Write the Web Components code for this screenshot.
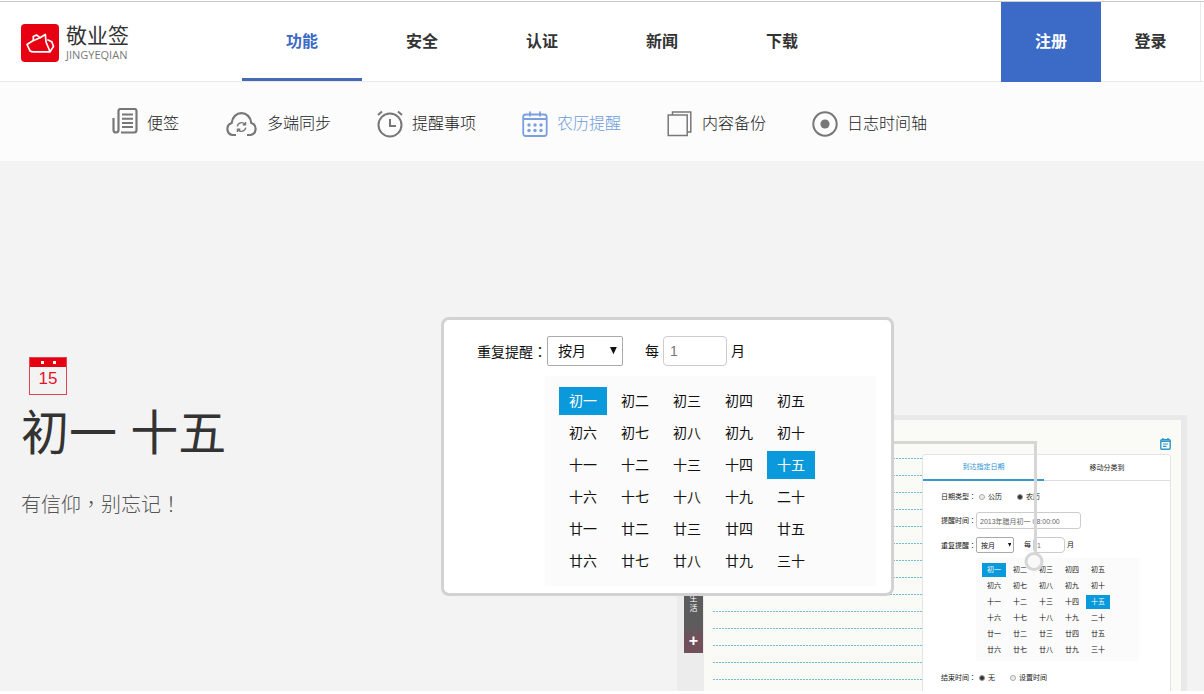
<!DOCTYPE html>
<html lang="zh-CN">
<head>
<meta charset="utf-8">
<title>敬业签</title>
<style>
html, body { margin: 0; }
body {
  background: #fff; color: #333;
  font: 16px/24px "Liberation Sans", "Noto Sans CJK SC", sans-serif;
}
</style>
</head>
<body>
<jy-page></jy-page>

<script>
function define(name, html, setup) {
  const tpl = document.createElement('template');
  tpl.innerHTML = '<style>*{box-sizing:border-box}button,input,select{font:inherit;color:inherit;margin:0}.mark{font-family:"Noto Sans CJK TC",sans-serif}</style>' + html;
  customElements.define(name, class extends HTMLElement {
    constructor() {
      super();
      this.attachShadow({ mode: 'open' }).append(tpl.content.cloneNode(true));
    }
    connectedCallback() {
      if (setup && !this.ready) { this.ready = true; setup(this, this.shadowRoot); }
    }
  });
}

/* Line icons */
const ICONS = {
  note: [26, 32, '<path d="M6.500 22V3q0-2 2-2h14q2 0 2 2v19q0 2.500-2.500 2.500H9M6.500 22q0 2.500-2.500 2.500t-2.500-2.500V10" stroke-width="2.200"/><path d="M10 6.500h11M10 10.700h11M10 14.900h11M10 19.100h11" stroke-width="2"/>'],
  cloud: [33, 26, '<path d="M11 24H7.500A6.200 6.200 0 0 1 6.700 12C7.200 6 11.500 2.200 16.500 2.200S25.800 6 26.300 12A6.200 6.200 0 0 1 25.500 24H22" stroke-width="2.200"/><path d="M12.300 15.300a4.300 4.300 0 0 1 7.600-2M20.700 16.700a4.300 4.300 0 0 1-7.600 2M20.500 11v2.800h-2.800M12.500 21v-2.800h2.800" stroke-width="1.400"/>'],
  alarm: [26, 28, '<circle cx="13" cy="15" r="11.500" stroke-width="2"/><path d="M13 9v7h6M1 5l4-3.500M25 5l-4-3.500" stroke-width="2"/>'],
  calendar: [26, 26, '<rect x="1.200" y="3.500" width="23.500" height="21.500" rx="2.500" stroke-width="1.800"/><path d="M1.500 8h23M8 .5v5M18 .5v5" stroke-width="1.800"/><g fill="currentColor" stroke="none"><circle cx="7" cy="14" r="1.700"/><circle cx="13" cy="14" r="1.700"/><circle cx="19" cy="14" r="1.700"/><circle cx="7" cy="19.500" r="1.700"/><circle cx="13" cy="19.500" r="1.700"/><circle cx="19" cy="19.500" r="1.700"/></g>'],
  copy: [26, 26, '<path d="M1.200 4h19v20.500h-19zM5.500 3.500V1H23.800V21H20.500" stroke-width="1.500"/>'],
  target: [26, 26, '<circle cx="13" cy="13" r="11.700" stroke-width="2"/><circle cx="13" cy="13" r="4.600" fill="currentColor" stroke="none"/>'],
  memo: [11, 12, '<rect x=".8" y="1.800" width="9.400" height="9.400" rx="1" stroke-width="1.400"/><path d="M1 3.200h9M3 0v2M8 0v2" stroke-width="1.400"/><path d="M3 6h5M3 8.300h3.500" stroke-width="1.200"/>']
};
define('jy-icon', '<style>:host{display:block;flex:none}svg{display:block;fill:none;stroke:currentColor}</style>', (el, root) => {
  const [w, h, body] = ICONS[el.getAttribute('name')];
  root.innerHTML += `<svg width="${w}" height="${h}" viewBox="0 0 ${w} ${h}" aria-hidden="true">${body}</svg>`;
});

define('jy-logo', `
<style>
:host { display: block; }
a { display: flex; align-items: center; gap: 7px; color: #333; text-decoration: none; }
svg { display: block; flex: none; }
.words { display: flex; flex-direction: column; }
.cn { font-size: 21px; line-height: 24px; }
.en { font: 11px/14px "Open Sans", "Noto Sans", sans-serif; color: #777; }
</style>
<a href="#">
  <svg width="38" height="38" viewBox="0 0 38 38" aria-hidden="true">
    <rect width="38" height="38" rx="4" fill="#e60012"/>
    <g fill="none" stroke="#fff" stroke-width="1.700" stroke-linejoin="round" stroke-linecap="round">
      <path d="M19 13.700 11.500 17 6 20.500 9 26.800Q10 27.800 13 27.800H29L32.500 22.500 30.800 17.800 27 16"/>
      <path d="M12.300 16 12.300 12.500 15.500 11 19 13.700 24.300 10.500 25 18 29 27.500"/>
    </g>
  </svg>
  <span class="words"><span class="cn">敬业签</span><span class="en">JINGYEQIAN</span></span>
</a>`);

define('jy-nav-item', `
<style>
:host { display: block; width: 120px; }
a { display: block; height: 79px; line-height: 79px; text-align: center; font-weight: bold; color: #333; text-decoration: none; }
:host([active]) a { color: #3b6ac7; border-bottom: 3px solid #4569b5; }
</style>
<a href="#"><slot></slot></a>`);

define('jy-header', `
<style>
:host { display: block; padding-top: 1px; background: #fff; }
header { display: flex; align-items: stretch; border-top: 1px solid #ccc; border-bottom: 1px solid #e9e9e9; padding: 0 3px 0 21px; height: 81px; }
jy-logo { width: 221px; padding-top: 22px; }
nav { display: flex; }
.account { display: flex; margin-left: auto; border-right: 1px solid #e9e9e9; }
.account a { width: 100px; height: 80px; line-height: 80px; text-align: center; font-weight: bold; color: #333; text-decoration: none; }
.account a.primary { background: #3b6ac7; color: #fff; }
.account a:last-child { width: 99px; }
</style>
<header>
  <jy-logo></jy-logo>
  <nav>
    <jy-nav-item active>功能</jy-nav-item><jy-nav-item>安全</jy-nav-item><jy-nav-item>认证</jy-nav-item><jy-nav-item>新闻</jy-nav-item><jy-nav-item>下载</jy-nav-item>
  </nav>
  <div class="account"><a class="primary" href="#">注册</a><a href="#">登录</a></div>
</header>`);

define('jy-feature-link', `
<style>
:host { display: block; }
a { display: flex; align-items: center; gap: 9px; color: #222; font-weight: 300; text-decoration: none; white-space: nowrap; }
jy-icon { color: #777; }
:host([active]) a { color: #6f9bdd; }
:host([active]) jy-icon { color: #7ba0e0; }
</style>
<a href="#"><slot></slot></a>`, (el, root) => {
  const icon = document.createElement('jy-icon');
  icon.setAttribute('name', el.getAttribute('icon'));
  root.querySelector('a').prepend(icon);
});

define('jy-features', `
<style>
:host { display: block; background: #fcfcfc; }
nav { display: flex; align-items: center; gap: 46px; height: 79px; padding: 4px 20px 0 112px; }
</style>
<nav>
  <jy-feature-link icon="note">便签</jy-feature-link>
  <jy-feature-link icon="cloud">多端同步</jy-feature-link>
  <jy-feature-link icon="alarm">提醒事项</jy-feature-link>
  <jy-feature-link icon="calendar" active>农历提醒</jy-feature-link>
  <jy-feature-link icon="copy">内容备份</jy-feature-link>
  <jy-feature-link icon="target">日志时间轴</jy-feature-link>
</nav>`);

/* Thirty lunar days in rows of five; sizes come from custom properties */
define('jy-lunar-days', `
<style>
:host { display: block; background: #fbfbfb; }
.days { display: grid; grid-template-columns: repeat(5, var(--day-w)); grid-auto-rows: var(--day-h); gap: var(--day-gap); }
button { border: 0; padding: 0; background: none; color: #111; text-align: center; line-height: var(--day-h); }
button[aria-pressed=true] { background: #0a9adb; color: #fff; }
</style>
<div class="days"></div>`, (el, root) => {
  const days = '初一 初二 初三 初四 初五 初六 初七 初八 初九 初十 十一 十二 十三 十四 十五 十六 十七 十八 十九 二十 廿一 廿二 廿三 廿四 廿五 廿六 廿七 廿八 廿九 三十'.split(' ');
  root.querySelector('.days').innerHTML = days.map((d, i) =>
    `<button type="button" aria-pressed="${i === 0 || i === 14}">${d}</button>`).join('');
});

/* "Repeat every N months" row, used at two sizes */
define('jy-repeat-row', `
<style>
:host { display: block; }
.row { display: flex; align-items: center; color: #111; }
.name { width: var(--label-w); white-space: nowrap; }
.pick { position: relative; width: var(--select-w); margin-right: var(--row-gap); }
select { appearance: none; display: block; width: 100%; height: var(--field-h); line-height: 1; padding: 0 0 0 var(--field-pad); border: 1px solid #aaa; border-radius: 2px; background: #fff; }
svg { position: absolute; right: 8%; top: 38%; width: 9%; height: 24%; }
input { width: var(--input-w); height: var(--field-h); margin: 0 var(--input-gap); padding: 0 var(--input-pad); border: 1px solid #ccc; border-radius: 4px; background: #fff; color: #777; }
</style>
<div class="row">
  <label class="name" for="unit">重复提醒<span class="mark" lang="zh-TW">：</span></label>
  <span class="pick"><select id="unit"><option>按月</option></select><svg viewBox="0 0 8 8" preserveAspectRatio="none" aria-hidden="true"><path d="M0 0h8L4 8z" fill="#111"/></svg></span>
  <label for="count">每</label><input id="count" value="1"><span>月</span>
</div>`);

define('jy-zoom-card', `
<style>
:host {
  display: block; width: 453px; height: 279px; padding: 16px 15px 6px 33px;
  border: 3px solid #d2d2d2; border-radius: 8px; background: #fff; font-size: 14px; line-height: 20px;
  --label-w: 70px; --select-w: 76px; --field-h: 30px; --field-pad: 10px; --row-gap: 22px;
  --input-w: 64px; --input-gap: 4px; --input-pad: 6px;
  --day-w: 48px; --day-h: 28px; --day-gap: 4px;
  box-sizing: border-box;
}
jy-lunar-days { margin: 10px 0 0 68px; padding: 11px 0 11px 14px; }
</style>
<jy-repeat-row></jy-repeat-row>
<jy-lunar-days></jy-lunar-days>`);

define('jy-reminder-panel', `
<style>
:host {
  display: block; border: 1px solid #e3e3e3; border-radius: 3px; background: #fff; font-size: 7px; line-height: 10px; color: #222;
  --label-w: 35px; --select-w: 38px; --field-h: 16px; --field-pad: 4px; --row-gap: 10px;
  --input-w: 32px; --input-gap: 2px; --input-pad: 3px;
  --day-w: 24px; --day-h: 14px; --day-gap: 2px;
}
.tabs { display: grid; grid-template-columns: 121px 1fr; height: 26px; border-bottom: 1px solid #ddd; }
.tabs button { border: 0; padding: 0; background: none; }
.tabs button:first-child { color: #2a94d0; border-bottom: 2px solid #3a98cb; margin-bottom: -1px; }
form { padding: 10px 31px 0 18px; }
.row { display: flex; align-items: center; }
.name { width: 35px; white-space: nowrap; }
.choice { display: flex; align-items: center; gap: 3px; padding-left: 3px; }
.choice input { appearance: none; width: 6px; height: 6px; border: 1px solid #aaa; border-radius: 50%; background: #eee; }
.choice input:checked { border-color: #999; background: #333; }
.choice + .choice { margin-left: 12px; }
.time { margin: 10px 0 8px; }
.time input { width: 105px; height: 17px; padding: 0 3px; border: 1px solid #ccc; border-radius: 3px; color: #666; }
jy-lunar-days { margin: 5px 0 11px 35px; padding: 5px 0 4px 6px; }
.actions { display: flex; justify-content: flex-end; gap: 14px; margin: 9px -23px 0 0; }
.actions span { width: 28px; height: 12px; background: #0a9adb; }
.actions span + span { background: #ddd; }
</style>
<div class="tabs"><button type="button">到达指定日期</button><button type="button">移动分类到</button></div>
<form>
  <div class="row kinds"><span class="name">日期类型<span class="mark" lang="zh-TW">：</span></span>
    <label class="choice"><input type="radio" name="kind">公历</label>
    <label class="choice"><input type="radio" name="kind" checked>农历</label></div>
  <div class="row time"><label class="name" for="at">提醒时间<span class="mark" lang="zh-TW">：</span></label><input id="at" value="2013年腊月初一 08:00:00"></div>
  <jy-repeat-row></jy-repeat-row>
  <jy-lunar-days></jy-lunar-days>
  <div class="row ends"><span class="name">结束时间<span class="mark" lang="zh-TW">：</span></span>
    <label class="choice"><input type="radio" name="end" checked>无</label>
    <label class="choice"><input type="radio" name="end">设置时间</label></div>
  <div class="actions"><span></span><span></span></div>
</form>`);

define('jy-notepad', `
<style>
:host { display: grid; grid-template-columns: 27px 1fr; border: solid #e9e9e9; border-width: 5px 6px 0 0; background: #fafaf7; overflow: hidden; box-sizing: border-box; }
.side { background: #ececec; padding-left: 7px; }
.tab { display: flex; flex-direction: column; justify-content: flex-end; align-items: center; width: 19px; height: 233px; background: linear-gradient(#5c5c5c 88%, #70505a 94%); color: #fff; font-size: 8px; line-height: 10px; }
.tab button { width: 19px; height: 24px; margin-top: 15px; padding: 0; border: 0; background: none; font-size: 16px; font-weight: bold; line-height: 24px; }
.paper { display: grid; grid-template-columns: 1fr 249px; padding: 0 10px 0 9px; min-height: 0; }
.lines { display: flex; flex-direction: column; gap: 16px; padding-top: 38px; }
.lines i { flex: none; height: 1px; background: repeating-linear-gradient(90deg, #72bccb 0 2px, transparent 2px 3px); }
.sheet { display: flex; flex-direction: column; padding-top: 18px; }
.sheet jy-icon { align-self: flex-end; color: #2c97c9; margin-bottom: 4px; }
jy-reminder-panel { flex: none; }
</style>
<div class="side"><div class="tab"><span>生</span><span>活</span><button type="button">+</button></div></div>
<div class="paper">
  <div class="lines"></div>
  <div class="sheet"><jy-icon name="memo"></jy-icon><jy-reminder-panel></jy-reminder-panel></div>
</div>`, (el, root) => {
  root.querySelector('.lines').innerHTML = '<i></i>'.repeat(14);
});

/* The notepad with its enlarged card lying over it, joined by a pointer */
define('jy-showcase', `
<style>
:host { display: block; position: relative; width: 746px; flex: none; }
jy-notepad { position: absolute; left: 236px; right: 0; top: 254px; height: 276px; }
jy-zoom-card { position: absolute; left: 0; top: 156px; }
svg { position: absolute; left: 452px; top: 279px; pointer-events: none; }
</style>
<jy-notepad></jy-notepad>
<svg width="152" height="132" viewBox="0 0 152 132" fill="none" stroke="#d6d6d6" stroke-width="3" aria-hidden="true"><path d="M0 2.500h142.500V114"/><circle cx="141" cy="121.500" r="8" fill="#f8f8f8" fill-opacity=".8"/></svg>
<jy-zoom-card></jy-zoom-card>`);

define('jy-date-badge', `
<style>
:host { display: block; width: 38px; height: 38px; border: 1px solid #dc4650; color: #e0152a; font-size: 17px; line-height: 24px; text-align: center; box-sizing: border-box; }
.bar { display: flex; justify-content: center; gap: 9px; height: 9px; padding-top: 3px; background: #e60012; }
.bar i { width: 3px; height: 3px; background: #fff; }
</style>
<div class="bar"><i></i><i></i></div><slot></slot>`);

define('jy-hero', `
<style>
:host { display: flex; justify-content: space-between; min-height: 530px; padding: 0 17px 0 21px; background: #f3f3f3; box-sizing: border-box; }
.copy { padding-top: 196px; white-space: nowrap; }
jy-date-badge { margin-left: 8px; }
h1 { margin: 5px 0 0; font-size: 48px; line-height: 68px; font-weight: 400; }
p { margin: 20px 0 0; font-size: 20px; line-height: 32px; font-weight: 300; color: #555; }
</style>
<div class="copy">
  <jy-date-badge>15</jy-date-badge>
  <h1>初一 十五</h1>
  <p>有信仰<span class="mark" lang="zh-TW">，</span>别忘记<span class="mark" lang="zh-TW">！</span></p>
</div>
<jy-showcase></jy-showcase>`);

define('jy-page', `
<style>:host { display: block; }</style>
<jy-header></jy-header>
<jy-features></jy-features>
<main><jy-hero></jy-hero></main>`);
</script>
</body>
</html>
